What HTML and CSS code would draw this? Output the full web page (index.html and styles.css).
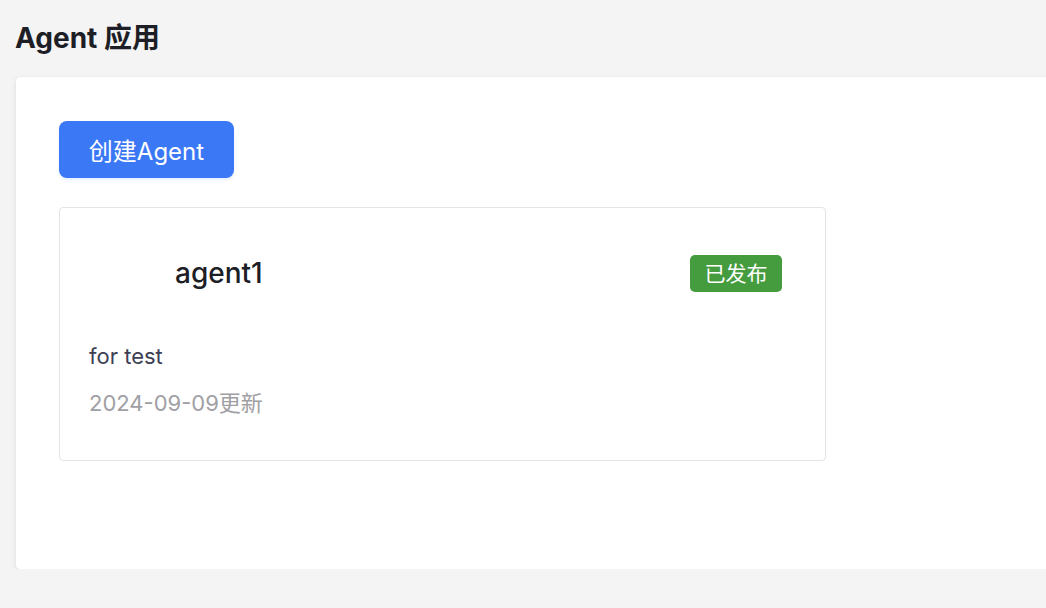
FILE: index.html
```html
<!DOCTYPE html>
<html lang="zh-CN">
<head>
<meta charset="utf-8">
<title>Agent 应用</title>
<link rel="stylesheet" href="styles.css">
</head>
<body>
<div class="page">
  <h1 class="title">Agent 应用</h1>
  <section class="panel">
    <button class="create-btn">创建Agent</button>
    <div class="agent-card">
      <div class="card-head">
        <div class="avatar"></div>
        <div class="agent-name">agent1</div>
        <span class="badge">已发布</span>
      </div>
      <div class="desc">for test</div>
      <div class="updated">2024-09-09更新</div>
    </div>
  </section>
</div>
</body>
</html>
```

FILE: styles.css
```css
html, body {
  margin: 0;
  padding: 0;
  background: #f4f4f4;
  overflow: hidden;
  font-family: Inter, "Noto Sans CJK SC", "Liberation Sans", sans-serif;
}
.page {
  width: 1100px;
  padding: 0 0 0 16px;
}
.title {
  margin: 0 0 0 -1px;
  padding: 22px 0 0 0;
  height: 55px;
  box-sizing: border-box;
  font-size: 28px;
  font-weight: 700;
  color: #1d1e26;
  line-height: 32px;
}
.panel {
  background: #fff;
  border-radius: 4px;
  box-shadow: 0 2px 6px rgba(0,0,0,0.08), 0 0 1px rgba(0,0,0,0.12);
  height: 492px;
  box-sizing: border-box;
  padding: 44px 43px;
  margin-top: 22px;
}
.create-btn {
  display: block;
  width: 175px;
  height: 57px;
  border: none;
  border-radius: 8px;
  background: #3b78f6;
  color: #fff;
  font-family: inherit;
  font-size: 24px;
  font-weight: 400;
  padding: 0;
  box-shadow: 0 2px 3px rgba(59,120,246,0.12);
}
.agent-card {
  margin-top: 29px;
  width: 767px;
  height: 254px;
  box-sizing: border-box;
  border: 1px solid #e4e4e7;
  border-radius: 4px;
  padding: 32px 43px 0 29px;
}
.card-head {
  display: flex;
  align-items: center;
  height: 66px;
}
.avatar {
  width: 56px;
  height: 56px;
  margin-right: 30px;
}
.agent-name {
  flex: 1;
  font-size: 28px;
  font-weight: 500;
  color: #1d1e26;
}
.badge {
  background: #459c3f;
  color: #fff;
  font-size: 21px;
  border-radius: 5px;
  width: 92px;
  height: 37px;
  line-height: 37px;
  text-align: center;
}
.desc {
  margin-top: 38px;
  font-size: 22px;
  line-height: 24px;
  color: #3d4052;
}
.updated {
  margin-top: 23px;
  font-size: 22px;
  line-height: 24px;
  color: #a0a0a4;
}
```
